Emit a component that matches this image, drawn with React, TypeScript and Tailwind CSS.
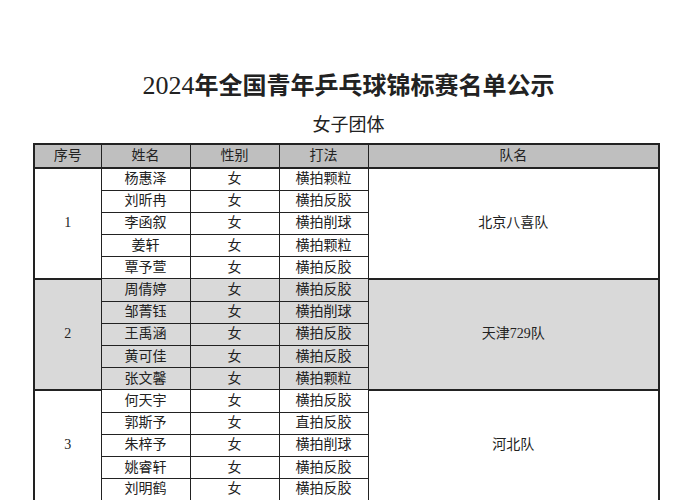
const groups = [
  {
    no: "1",
    team: "北京八喜队",
    shade: false,
    players: [
      ["杨惠泽", "横拍颗粒"],
      ["刘昕冉", "横拍反胶"],
      ["李函叙", "横拍削球"],
      ["姜轩", "横拍颗粒"],
      ["覃予萱", "横拍反胶"],
    ],
  },
  {
    no: "2",
    team: "天津729队",
    shade: true,
    players: [
      ["周倩婷", "横拍反胶"],
      ["邹菁钰", "横拍削球"],
      ["王禹涵", "横拍反胶"],
      ["黄可佳", "横拍反胶"],
      ["张文馨", "横拍颗粒"],
    ],
  },
  {
    no: "3",
    team: "河北队",
    shade: false,
    players: [
      ["何天宇", "横拍反胶"],
      ["郭斯予", "直拍反胶"],
      ["朱梓予", "横拍削球"],
      ["姚睿轩", "横拍反胶"],
      ["刘明鹤", "横拍反胶"],
    ],
  },
];

const cell = "border border-[#222] text-center align-middle p-0";

export default function App() {
  return (
    <div className="w-[697px] h-[500px] overflow-hidden bg-white text-[#222] font-['Liberation_Serif','Noto_Sans_CJK_SC',serif]">
      <h1 className="pt-[69px] text-center text-[24px] leading-[30px]">
        <span className="font-['Liberation_Serif',serif] text-[26px]">2024</span>
        <span className="font-['Noto_Sans_CJK_SC',sans-serif] font-bold">年全国青年乒乓球锦标赛名单公示</span>
      </h1>
      <div className="mt-[12px] text-center text-[18px] leading-[24px]">女子团体</div>
      <table className="mt-[6px] ml-[33px] w-[625px] table-fixed border-collapse border-2 border-[#222] text-[14px] leading-[20px]">
        <colgroup>
          <col className="w-[67px]" />
          <col className="w-[89px]" />
          <col className="w-[89px]" />
          <col className="w-[89px]" />
          <col className="w-[291px]" />
        </colgroup>
        <thead>
          <tr className="h-[24px] bg-[#bfbfbf]">
            <th className={`${cell} border-b-2 font-normal`}>序号</th>
            <th className={`${cell} border-b-2 font-normal`}>姓名</th>
            <th className={`${cell} border-b-2 font-normal`}>性别</th>
            <th className={`${cell} border-b-2 font-normal`}>打法</th>
            <th className={`${cell} border-b-2 font-normal`}>队名</th>
          </tr>
        </thead>
        <tbody>
          {groups.map((g) =>
            g.players.map((p, i) => (
              <tr key={g.no + i} className={`h-[22.2px] ${g.shade ? "bg-[#d9d9d9]" : ""}`}>
                {i === 0 && (
                  <td rowSpan={5} className={`${cell} border-b-2`}>
                    {g.no}
                  </td>
                )}
                <td className={cell}>{p[0]}</td>
                <td className={cell}>女</td>
                <td className={cell}>{p[1]}</td>
                {i === 0 && (
                  <td rowSpan={5} className={`${cell} border-b-2`}>
                    {g.team}
                  </td>
                )}
              </tr>
            ))
          )}
        </tbody>
      </table>
    </div>
  );
}
